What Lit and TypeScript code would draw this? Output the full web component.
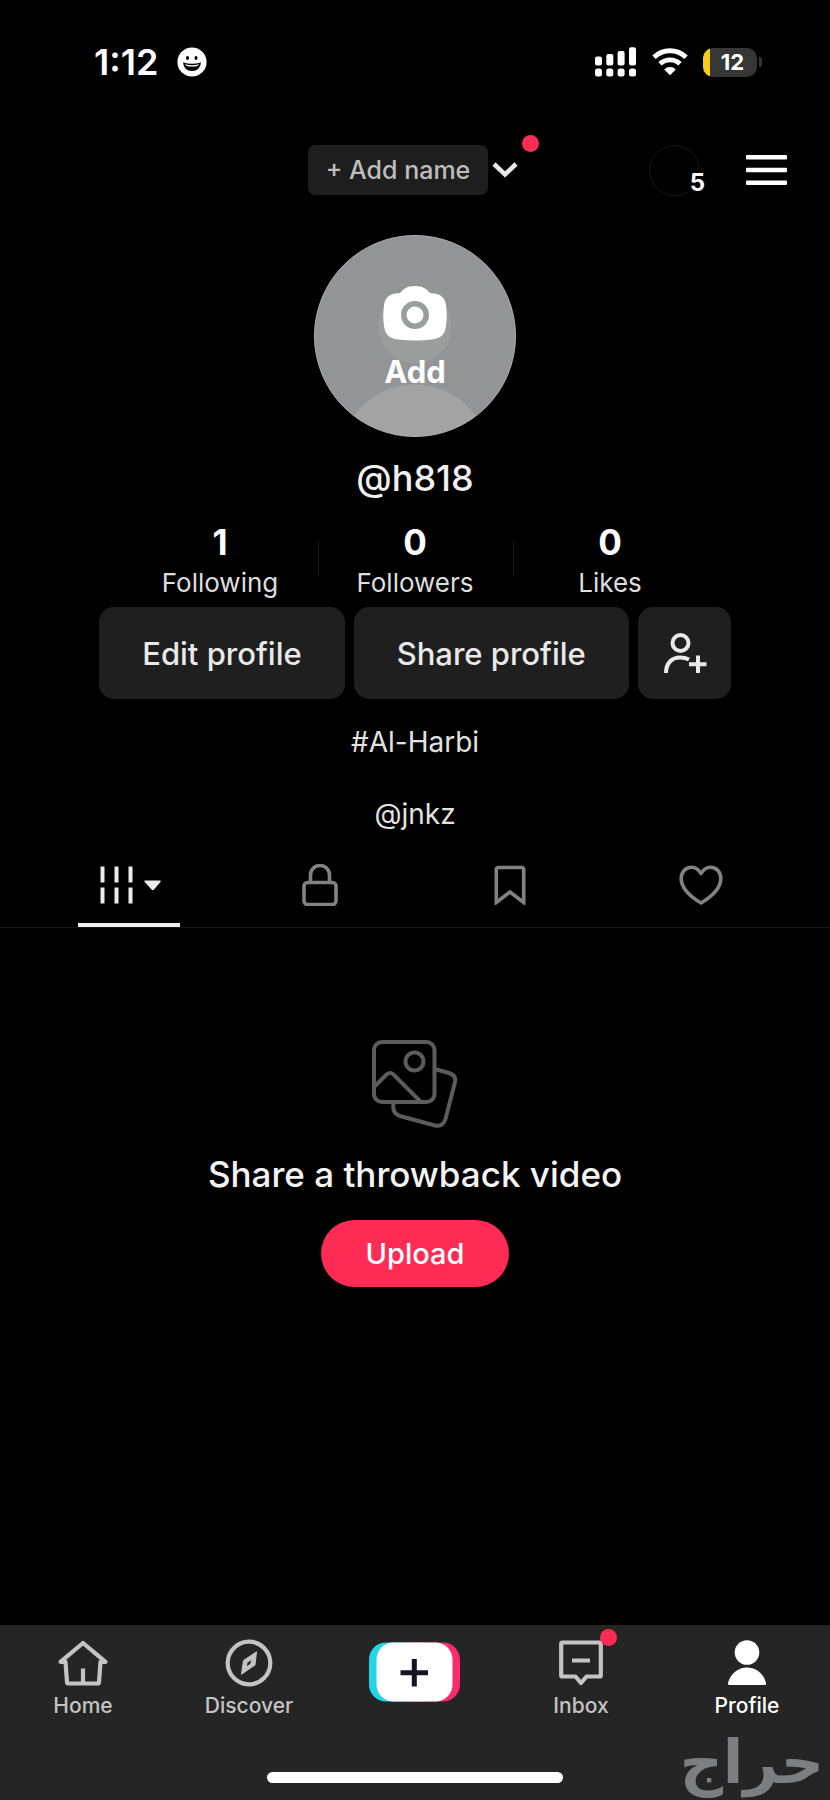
import { LitElement, html, css, TemplateResult } from "lit";
import { customElement, state } from "lit/decorators.js";
import { classMap } from "lit/directives/class-map.js";

const icons = {
  smile: html`<svg width="30" height="30" viewBox="0 0 30 30" aria-hidden="true">
    <circle cx="15" cy="15" r="14.6" fill="#fff" />
    <ellipse cx="10.5" cy="11" rx="1.5" ry="2.1" fill="#000" />
    <ellipse cx="19" cy="11" rx="1.5" ry="2.1" fill="#000" />
    <path d="M6 15.5Q15 18 24 15.5Q23 24 15 24Q7 24 6 15.5Z" fill="#000" />
    <path d="M8 17.3Q15 19 22 17.3Q21.5 19.6 15 19.6Q8.500 19.600 8 17.300Z" fill="#fff" />
  </svg>`,
  signal: html`<svg width="42" height="30" viewBox="0 0 42 30" fill="#fff" role="img" aria-label="Signal">
    <rect x="0" y="9.500" width="7" height="9" rx="2" /><rect x="11.300" y="7" width="7" height="11.500" rx="2" />
    <rect x="22.600" y="4" width="7" height="14.500" rx="2" /><rect x="34" y="0.300" width="7" height="18.200" rx="2" />
    <rect x="0" y="21.500" width="7" height="8" rx="2.500" /><rect x="11.300" y="21.500" width="7" height="8" rx="2.500" />
    <rect x="22.600" y="21.500" width="7" height="8" rx="2.500" /><rect x="34" y="21.500" width="7" height="8" rx="2.500" />
  </svg>`,
  wifi: html`<svg width="36" height="28" viewBox="0 0 36 28" role="img" aria-label="Wi-Fi">
    <path d="M2 9.300A23 23 0 0 1 34 9.300" fill="none" stroke="#fff" stroke-width="5" />
    <path d="M8 15.800A14.500 14.500 0 0 1 28 15.800" fill="none" stroke="#fff" stroke-width="4.800" />
    <path d="M12.200 21.500A8 8 0 0 1 23.800 21.500L18 27.300Z" fill="#fff" />
  </svg>`,
  chevron: html`<svg width="26" height="16" viewBox="0 0 26 16" aria-hidden="true">
    <path d="M2 2L13 12.500L24 2" fill="none" stroke="#e9e9e9" stroke-width="4.500" />
  </svg>`,
  menu: html`<svg width="42" height="30" viewBox="0 0 42 30" fill="#fff" aria-hidden="true">
    <rect x="0" y="0" width="41" height="4.600" rx="1" /><rect x="0" y="12.700" width="41" height="4.600" rx="1" />
    <rect x="0" y="25.400" width="41" height="4.600" rx="1" />
  </svg>`,
  camera: html`<svg width="64" height="55" viewBox="0 0 64 55" aria-hidden="true">
    <path fill-rule="evenodd" fill="#fff" d="M32 0C40 0 43.500 3 46 6Q47 7.200 49 7.200C58 7.500 62 12 63 19C64 27 64 34 63 40C62 49 57 52.500 49 53.500Q32 55.500 15 53.500C7 52.500 2 49 1 40C0 34 0 27 1 19C2 12 6 7.500 15 7.200Q17 7.200 18 6C20.500 3 24 0 32 0ZM32 15A14 14 0 1 0 32 43A14 14 0 1 0 32 15ZM32 20.500A8.500 8.500 0 1 1 32 37.500A8.500 8.500 0 1 1 32 20.500Z" />
  </svg>`,
  addFriend: html`<svg width="44" height="42" viewBox="0 0 44 42" fill="none" stroke="#e9e9e9" stroke-width="4" aria-hidden="true">
    <circle cx="17.500" cy="11" r="8" /><path d="M3 41C3 31 9 25.500 17 25.500Q22 25.500 26 27.500M35 23.500V41M26 32.300H43.500" />
  </svg>`,
  grid: html`<svg width="66" height="38" viewBox="-4 0 66 38" aria-hidden="true">
    <path d="M2.500 0.500V16.500M16.500 0.500V16.500M30.500 0.500V16.500M2.500 21.500V37.500M16.500 21.500V37.500M30.500 21.500V37.500" stroke="#ececec" stroke-width="4" />
    <path d="M45 14.500H60Q61.500 14.500 60.500 16L54 23.500Q52.800 25 51.500 23.500L44.700 16Q43.500 14.500 45 14.500Z" fill="#ececec" />
  </svg>`,
  lock: html`<svg width="38" height="42" viewBox="0 0 38 42" fill="none" stroke="currentColor" stroke-width="3.600" aria-hidden="true">
    <rect x="3" y="18.500" width="32" height="22" rx="3.500" /><path d="M9.500 18V11A9.500 9.500 0 0 1 28.500 11V18" />
  </svg>`,
  bookmark: html`<svg width="32" height="40" viewBox="0 0 32 40" fill="none" stroke="currentColor" stroke-width="3.600" aria-hidden="true">
    <path d="M2.300 37.500V4.500Q2.300 2.500 4.500 2.500H27.500Q29.700 2.500 29.700 4.500V37.500L16 27Z" />
  </svg>`,
  heart: html`<svg width="44" height="40" viewBox="0 0 44 40" fill="none" stroke="currentColor" stroke-width="3.600" stroke-linejoin="round" aria-hidden="true">
    <path d="M22 8.500C19.500 4.500 16.500 2.300 12.500 2.300C6.500 2.300 2.200 7 2.200 13.500C2.200 24.500 12 32 22 38C32 32 41.800 24.500 41.800 13.500C41.800 7 37.500 2.300 31.500 2.300C27.500 2.300 24.500 4.500 22 8.500Z" />
  </svg>`,
  photos: html`<svg width="86" height="88" viewBox="0 0 86 88" fill="none" stroke="#5c5c5c" stroke-width="4" aria-hidden="true">
    <rect x="2" y="2" width="60.500" height="60" rx="8" /><circle cx="42.500" cy="21.500" r="9" />
    <path d="M2 47L14.500 34.500Q18 31.500 21.500 34.500L49 62M62.500 29L77 33Q84.500 35.500 83 42L73.500 79Q71 87 63 85.500L28 76Q20 73.500 21.500 64V62" />
  </svg>`,
  home: html`<svg width="50" height="46" viewBox="0 0 50 46" fill="none" stroke="currentColor" stroke-width="4.200" stroke-linejoin="round" aria-hidden="true">
    <path d="M7.500 21.800H2.500L25 3L47.500 21.800H42.500L41 42Q40.900 43.500 39.500 43.500H10.500Q9.100 43.500 9 42ZM25 43V28.500" />
  </svg>`,
  discover: html`<svg width="48" height="48" viewBox="0 0 48 48" fill="none" stroke="currentColor" aria-hidden="true">
    <circle cx="24" cy="24" r="21.300" stroke-width="4.200" />
    <path d="M31.500 12.800L30 26L16.500 35.200L18.500 21.500ZM26.800 20.200L22 23.500L21.300 28L25.800 25Z" fill="currentColor" fill-rule="evenodd" stroke-width="1" stroke-linejoin="round" />
  </svg>`,
  inbox: html`<svg width="44" height="46" viewBox="0 0 44 46" fill="none" stroke="currentColor" stroke-width="4.200" stroke-linejoin="round" aria-hidden="true">
    <path d="M3 2.500H41Q41.800 2.500 41.800 3.500V35.500Q41.800 36.500 41 36.500H27.500L22 43L16.500 36.500H3Q2.200 36.500 2.200 35.500V3.500Q2.200 2.500 3 2.500ZM13 20.500H31" />
  </svg>`,
  profile: html`<svg width="40" height="46" viewBox="0 0 40 46" fill="currentColor" aria-hidden="true">
    <circle cx="20" cy="12.500" r="12.300" /><path d="M2.500 45Q0.500 45 1 43C3.500 33.500 11 27.500 20 27.500C29 27.500 36.500 33.500 39 43Q39.500 45 37.500 45Z" />
  </svg>`,
  create: html`<svg width="92" height="60" viewBox="0 0 92 60" aria-hidden="true">
    <rect x="0" y="0.500" width="70" height="59" rx="17" fill="#20d5e8" />
    <rect x="22" y="0.500" width="69" height="59" rx="17" fill="#fb2a6d" />
    <rect x="7.500" y="0.500" width="76" height="59" rx="17" fill="#fff" />
    <path d="M45.300 17V44.500M31.500 30.700H59" stroke="#151522" stroke-width="5" />
  </svg>`,
};

const reset = css`
  :host, * { box-sizing: border-box; }
  button { font: inherit; color: inherit; background: none; border: 0; padding: 0; margin: 0; cursor: pointer; }
  a { color: inherit; text-decoration: none; }
  svg { display: block; flex: none; }
`;

@customElement("status-bar")
class StatusBar extends LitElement {
  static styles = [reset, css`
    :host { display: flex; align-items: center; justify-content: space-between; height: 124px; padding: 0 68px 0 94px; }
    .side { display: flex; align-items: center; }
    .time { font-size: 36px; font-weight: 600; line-height: 44px; margin-right: 19px; }
    .right { gap: 15px; }
    .power { display: flex; align-items: center; gap: 2px; }
    .battery { width: 54px; height: 29px; border-radius: 10px; padding-left: 5px; font-size: 22px; font-weight: 700; line-height: 29px; text-align: center;
      background: linear-gradient(90deg, #f6cd16 7px, #363637 7px); }
    .nub { width: 3px; height: 10px; border-radius: 0 3px 3px 0; background: #363637; }
  `];
  render() {
    return html`
      <div class="side"><span class="time">1:12</span>${icons.smile}</div>
      <div class="side right">${icons.signal}${icons.wifi}
        <div class="power"><div class="battery">12</div><div class="nub"></div></div>
      </div>`;
  }
}

@customElement("profile-header")
class ProfileHeader extends LitElement {
  static styles = [reset, css`
    :host { display: grid; grid-template-columns: 1fr auto 1fr; align-items: center; height: 92px; padding: 0 42px; }
    .title { grid-column: 2; display: flex; align-items: center; gap: 4px; padding-right: 4px; }
    .name { height: 50px; padding: 0 18px; border-radius: 7px; background: #1e1e1e; color: #bdbdbd; font-size: 25px; font-weight: 500; white-space: nowrap; }
    .switch { position: relative; height: 50px; }
    .dot { position: absolute; top: -10px; right: -21px; width: 17px; height: 17px; border-radius: 50%; background: #fe2c55; }
    .actions { justify-self: end; display: flex; align-items: center; gap: 46px; }
    .ring { position: relative; width: 51px; height: 51px; border: 1px solid #181818; border-radius: 50%; }
    .count { position: absolute; right: -7px; bottom: -1px; padding: 0 1px; background: #000; font-size: 24px; font-weight: 700; line-height: 26px; }
  `];
  render() {
    return html`
      <div class="title">
        <button class="name">+ Add name</button>
        <button class="switch" aria-label="Switch account">${icons.chevron}<span class="dot"></span></button>
      </div>
      <div class="actions">
        <button class="ring" aria-label="Profile views"><span class="count">5</span></button>
        <button aria-label="Menu">${icons.menu}</button>
      </div>`;
  }
}

@customElement("profile-card")
class ProfileCard extends LitElement {
  static styles = [reset, css`
    :host { display: flex; flex-direction: column; align-items: center; padding-top: 19px; }
    .avatar { position: relative; width: 202px; height: 202px; border-radius: 50%; overflow: hidden; border: 1px solid #b0b0b0;
      background: radial-gradient(circle at 50% 91px, #9b9c9c 36px, transparent 37px), radial-gradient(circle at 50% 223px, #a3a3a3 74px, transparent 75px), #929495;
      display: flex; flex-direction: column; align-items: center; padding-top: 50px; gap: 11px; }
    .add { font-size: 31px; font-weight: 700; line-height: 40px; }
    .handle { margin: 19px 0 22px; font-size: 36px; font-weight: 500; line-height: 44px; color: #f0f0f0; }
    .stats { display: grid; grid-template-columns: repeat(3, 195px); margin: 0; }
    .stat { display: flex; flex-direction: column-reverse; align-items: center; gap: 3px; position: relative; }
    .stat + .stat::before { content: ""; position: absolute; left: 0; top: 18px; height: 36px; width: 1px; background: #161616; }
    .value { margin: 0; font-size: 35px; font-weight: 700; line-height: 40px; }
    .label { font-size: 26px; line-height: 36px; color: #dedede; }
    .actions { display: flex; gap: 9px; margin-top: 6px; }
    .action { height: 92px; padding: 0 43px; border-radius: 15px; background: #1f1f1f; color: #e9e9e9; font-size: 31px; font-weight: 500; white-space: nowrap; }
    .friend { width: 93px; padding: 0 0 0 25px; }
    .bio { display: flex; flex-direction: column; align-items: center; gap: 36px; margin-top: 25px; font-size: 28px; line-height: 36px; color: #e2e2e2; }
    .bio p { margin: 0; }
  `];
  private stats: [string, string][] = [["Following", "1"], ["Followers", "0"], ["Likes", "0"]];
  render() {
    return html`
      <button class="avatar">${icons.camera}<span class="add">Add</span></button>
      <div class="handle">@h818</div>
      <dl class="stats">${this.stats.map(([label, value]) => html`
        <div class="stat"><dt class="label">${label}</dt><dd class="value">${value}</dd></div>`)}</dl>
      <div class="actions">
        <button class="action">Edit profile</button>
        <button class="action">Share profile</button>
        <button class="action friend" aria-label="Add friends">${icons.addFriend}</button>
      </div>
      <div class="bio"><p>#Al-Harbi</p><p>@jnkz</p></div>`;
  }
}

@customElement("profile-tabs")
class ProfileTabs extends LitElement {
  static styles = [reset, css`
    :host { display: block; margin-top: 11px; border-bottom: 1px solid #141414; }
    .tabs { display: grid; grid-template-columns: repeat(4, 1fr); padding: 0 34px; }
    .tab { position: relative; height: 84px; display: flex; align-items: center; justify-content: center; color: #828282; }
    .on::after { content: ""; position: absolute; bottom: 0; left: 50%; width: 102px; margin-left: -51px; height: 4px; background: #f0f0f0; }
  `];
  @state() private active = 0;
  private tabs: [string, TemplateResult][] = [["Videos", icons.grid], ["Private", icons.lock], ["Saved", icons.bookmark], ["Liked", icons.heart]];
  render() {
    return html`<div class="tabs" role="tablist">${this.tabs.map(([label, icon], i) => html`
      <button role="tab" aria-label=${label} aria-selected=${i === this.active}
        class=${classMap({ tab: true, on: i === this.active })} @click=${() => (this.active = i)}>${icon}</button>`)}</div>`;
  }
}

@customElement("empty-feed")
class EmptyFeed extends LitElement {
  static styles = [reset, css`
    :host { display: flex; flex-direction: column; align-items: center; gap: 24px; padding: 112px 24px 48px; }
    .title { margin: 0; font-size: 35px; font-weight: 500; line-height: 44px; text-align: center; color: #f3f3f3; }
    .upload { height: 67px; padding: 0 45px; border-radius: 34px; background: #fe2c55; font-size: 29px; font-weight: 500; }
  `];
  render() {
    return html`${icons.photos}<h2 class="title">Share a throwback video</h2><button class="upload">Upload</button>`;
  }
}

@customElement("bottom-nav")
class BottomNav extends LitElement {
  static styles = [reset, css`
    :host { display: block; position: relative; margin-top: auto; height: 175px; padding-top: 14px; background: #252525; }
    .items { display: grid; grid-template-columns: repeat(5, 1fr); }
    .item { display: flex; flex-direction: column; align-items: center; gap: 5px; color: #c4c4c4; font-size: 21px; font-weight: 500; line-height: 28px; }
    .on { color: #fff; }
    .icon { position: relative; height: 48px; display: flex; align-items: center; }
    .create { height: 63px; align-items: flex-end; }
    .dot { position: absolute; top: -10px; right: -14px; width: 17px; height: 17px; border-radius: 50%; background: #fe2c55; }
    .indicator { width: 296px; height: 11px; margin: 52px auto 0; border-radius: 6px; background: #fff; }
    .mark { position: absolute; right: 6px; bottom: 8px; font-family: "DejaVu Sans", sans-serif; font-weight: 700; font-size: 60px; line-height: 60px; color: #7c7f80; pointer-events: none; }
  `];
  render() {
    const item = (label: string, icon: TemplateResult, on = false, dot = false) => html`
      <a href="#" class=${classMap({ item: true, on })}><span class="icon">${icon}${dot ? html`<span class="dot"></span>` : ""}</span>${label}</a>`;
    return html`
      <nav class="items">
        ${item("Home", icons.home)}${item("Discover", icons.discover)}
        <a href="#" class="item" aria-label="Create"><span class="icon create">${icons.create}</span></a>
        ${item("Inbox", icons.inbox, false, true)}${item("Profile", icons.profile, true)}
      </nav>
      <div class="indicator"></div>
      <span class="mark" lang="ar" dir="rtl">حراج</span>`;
  }
}

@customElement("app-root")
class AppRoot extends LitElement {
  static styles = css`
    :host { display: flex; flex-direction: column; min-height: 100vh; background: #000; color: #fff; font-family: Inter, Roboto, sans-serif; }
  `;
  render() {
    return html`
      <status-bar></status-bar>
      <profile-header></profile-header>
      <profile-card></profile-card>
      <profile-tabs></profile-tabs>
      <empty-feed></empty-feed>
      <bottom-nav></bottom-nav>`;
  }
}
